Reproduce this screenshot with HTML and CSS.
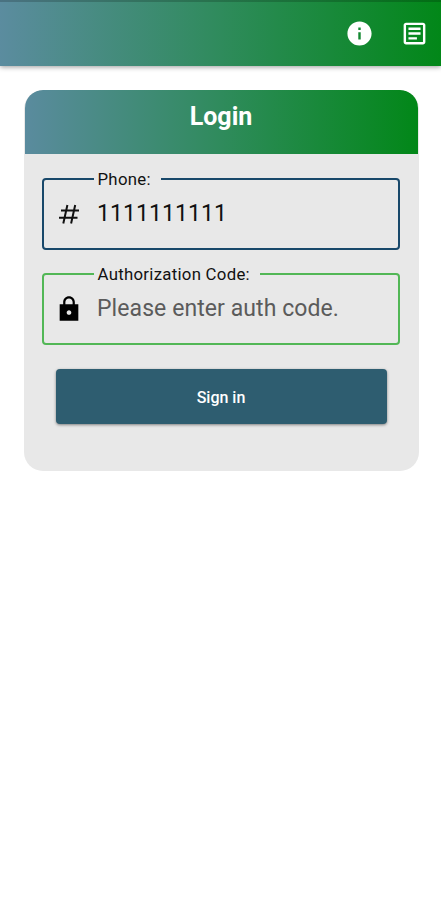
FILE: index.html
```html
<!DOCTYPE html>
<html lang="en">
<head>
<meta charset="utf-8">
<title>Login</title>
<link rel="stylesheet" href="styles.css">
</head>
<body>
<header class="appbar">
  <svg class="action" viewBox="0 0 24 24"><path d="M12 2C6.480 2 2 6.480 2 12s4.480 10 10 10 10-4.480 10-10S17.520 2 12 2zm1 15h-2v-6h2v6zm0-8h-2V7h2v2z"/></svg>
  <svg class="action" viewBox="0 0 24 24"><path d="M19 5v14H5V5h14m0-2H5c-1.100 0-2 .9-2 2v14c0 1.100.9 2 2 2h14c1.100 0 2-.9 2-2V5c0-1.100-.9-2-2-2zM14 17H7v-2h7v2zm3-4H7v-2h10v2zm0-4H7V7h10v2z"/></svg>
</header>
<main class="card">
  <h1 class="card-title"><span class="title-text">Login</span></h1>
  <form class="form">
    <fieldset class="field field-phone">
      <legend class="label"><span class="label-text phone-label">Phone:</span></legend>
      <div class="row">
        <svg class="icon" viewBox="0 0 28 28"><path class="hash" d="M6 10.600H24M4 17.700H22.500M12.400 5L8.300 23.500M20.200 5L16.100 23.500"/></svg>
        <span class="value phone-value">1111111111</span>
      </div>
    </fieldset>
    <fieldset class="field field-code">
      <legend class="label"><span class="label-text code-label">Authorization Code:</span></legend>
      <div class="row">
        <svg class="icon" viewBox="0 0 24 24"><path d="M20 8h-3V6c0-2.760-2.240-5-5-5S7 3.240 7 6v2H4v14h16V8zm-8 9c-1.100 0-2-.9-2-2s.9-2 2-2 2 .9 2 2-.9 2-2 2zm3.100-9H8.900V6c0-1.710 1.390-3.100 3.100-3.100s3.100 1.390 3.100 3.100v2z"/></svg>
        <span class="value placeholder">Please enter auth code.</span>
      </div>
    </fieldset>
    <button class="submit" type="button"><span class="submit-text">Sign in</span></button>
  </form>
</main>
</body>
</html>
```

FILE: styles.css
```css
* { box-sizing: border-box; }
body {
  margin: 0;
  min-height: 900px;
  background: #fff;
  color: #111;
  font-family: Roboto, sans-serif;
}
.appbar {
  display: flex;
  align-items: center;
  justify-content: flex-end;
  gap: 26px;
  height: 66px;
  padding: 0 12.500px 2px 0;
  border-top: 2px solid rgba(0, 0, 0, .18);
  background: linear-gradient(to right, #5b8c9f, #2f8b5c 50%, #028718) border-box;
  box-shadow: 0 1px 5px rgba(0, 0, 0, .4);
}
.action { width: 29px; height: 29px; fill: #fff; }
.card {
  width: 395px;
  height: 381px;
  margin: 24px 0 0 23.5px;
  border-radius: 19px;
  overflow: hidden;
  background: #e8e8e8;
}
.card-title {
  height: 64px;
  margin: 0 1px;
  padding-top: 12px;
  border-radius: 18px 18px 0 0;
  background: linear-gradient(to right, #5a8b9e, #2f8b5c 50%, #028718);
  color: #fff;
  font-size: 25px;
  font-weight: 700;
  line-height: 30px;
  text-align: center;
}
.form { padding: 15.500px 18.500px 0; }
.field {
  height: 80px;
  min-width: 0;
  margin: 0 0 15.500px;
  padding: 0 14px 10px;
  border: 2px solid;
  border-radius: 4px;
}
.field-phone { border-color: #18486a; }
.field-code { border-color: #52b756; }
.label {
  height: 18px;
  margin-left: 36px;
  padding: 0 10px 0 3.500px;
  font-size: 16.800px;
  line-height: 18px;
  letter-spacing: .28px;
  white-space: nowrap;
}
.row { display: flex; align-items: center; gap: 14px; height: 52px; }
.icon { flex: none; width: 28px; height: 28px; margin-left: -3px; fill: #000; }
.hash { fill: none; stroke: #111; stroke-width: 2; }
.value { font-size: 23px; line-height: 28px; letter-spacing: .08px; white-space: nowrap; }
.placeholder { color: #5b5b5b; }
.submit {
  display: block;
  width: 331px;
  height: 55px;
  margin: 24px 0 0 13.500px;
  padding: 2px 0 0;
  border: 0;
  border-radius: 4px;
  background: #2e5d70;
  box-shadow: 0 1px 3px rgba(0, 0, 0, .45);
  color: #fff;
  font: 500 16px/20px Roboto, sans-serif;
}
```
